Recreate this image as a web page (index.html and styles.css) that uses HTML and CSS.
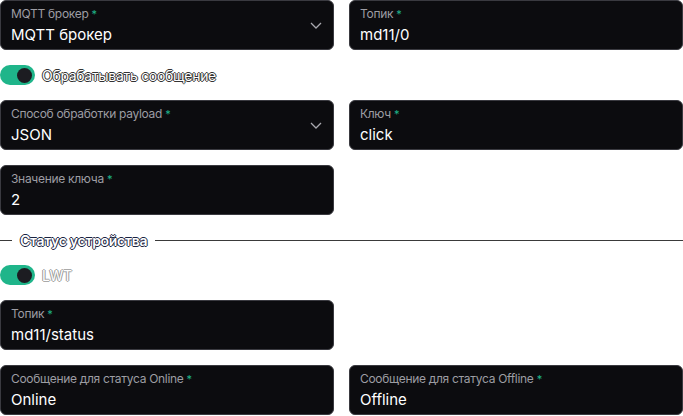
FILE: index.html
```html
<!DOCTYPE html>
<html lang="ru">
<head>
  <meta charset="UTF-8">
  <meta name="viewport" content="width=device-width, initial-scale=1.0">
  <title>Настройки MQTT</title>
  <link rel="stylesheet" href="styles.css">
</head>
<body>
  <div class="form">
    <div class="row">
      <div class="field select">
        <span class="label">MQTT брокер <i>*</i></span>
        <span class="value">MQTT брокер</span>
        <svg class="chevron" viewBox="0 0 12 7"><path d="M1 1l5 5 5-5" /></svg>
      </div>
      <div class="field">
        <span class="label">Топик <i>*</i></span>
        <span class="value">md11/0</span>
      </div>
    </div>

    <label class="switch">
      <span class="track"><span class="knob"></span></span>
      <span class="switch-text">Обрабатывать сообщение</span>
    </label>

    <div class="row">
      <div class="field select">
        <span class="label">Способ обработки payload <i>*</i></span>
        <span class="value">JSON</span>
        <svg class="chevron" viewBox="0 0 12 7"><path d="M1 1l5 5 5-5" /></svg>
      </div>
      <div class="field">
        <span class="label">Ключ <i>*</i></span>
        <span class="value">click</span>
      </div>
    </div>

    <div class="row">
      <div class="field">
        <span class="label">Значение ключа <i>*</i></span>
        <span class="value">2</span>
      </div>
    </div>

    <div class="divider">
      <span class="divider-text">Статус устройства</span>
    </div>

    <label class="switch">
      <span class="track"><span class="knob"></span></span>
      <span class="switch-text light">LWT</span>
    </label>

    <div class="row">
      <div class="field">
        <span class="label">Топик <i>*</i></span>
        <span class="value">md11/status</span>
      </div>
    </div>

    <div class="row">
      <div class="field">
        <span class="label">Сообщение для статуса Online <i>*</i></span>
        <span class="value">Online</span>
      </div>
      <div class="field">
        <span class="label">Сообщение для статуса Offline <i>*</i></span>
        <span class="value">Offline</span>
      </div>
    </div>
  </div>
</body>
</html>
```

FILE: styles.css
```css
body {
  margin: 0;
  background: #fff;
  font-family: Inter, "Noto Sans", sans-serif;
}

.form {
  width: 683px;
  display: flex;
  flex-direction: column;
  gap: 15px;
}

.row {
  display: grid;
  grid-template-columns: 1fr 1fr;
  gap: 15px;
}

.field {
  position: relative;
  height: 50px;
  box-sizing: border-box;
  padding: 6px 10px 0;
  background: #0c0c0f;
  border: 1px solid #3a3a40;
  border-radius: 6px;
  display: flex;
  flex-direction: column;
}

.label {
  font-size: 12px;
  line-height: 14px;
  color: #9d9da3;
  letter-spacing: -0.3px;
}

.label i {
  font-style: normal;
  color: #1fb58a;
  font-size: 11px;
}

.value {
  margin-top: 4px;
  font-size: 15px;
  line-height: 20px;
  font-weight: 400;
  color: #fff;
}

.chevron {
  position: absolute;
  right: 11px;
  top: 21px;
  width: 12px;
  height: 7px;
  fill: none;
  stroke: #a8a8ae;
  stroke-width: 1.3;
}

.switch {
  display: flex;
  align-items: center;
  gap: 7px;
  height: 20px;
}

.track {
  width: 35px;
  height: 20px;
  border-radius: 10px;
  background: #1fb58a;
  display: flex;
  align-items: center;
  justify-content: flex-end;
  padding-right: 3px;
  box-sizing: border-box;
}

.knob {
  width: 15px;
  height: 15px;
  border-radius: 50%;
  background: #1c1c21;
}

.switch-text {
  font-size: 14px;
  color: #fff;
  letter-spacing: -0.3px;
  text-shadow: 1px 0 #333, -1px 0 #333, 0 1px #333, 0 -1px #333;
}

.switch-text.light {
  text-shadow: 1px 0 #999, -1px 0 #999, 0 1px #aaa, 0 -1px #aaa;
}

.divider {
  display: flex;
  align-items: center;
  gap: 8px;
  height: 20px;
}

.divider::before {
  content: "";
  width: 12px;
  border-top: 1.5px solid #3a3a3a;
}

.divider::after {
  content: "";
  flex: 1;
  border-top: 1.5px solid #3a3a3a;
}

.divider-text {
  font-size: 14px;
  font-weight: 600;
  color: #fff;
  letter-spacing: -0.3px;
  text-shadow: 1px 0 #1a2340, -1px 0 #1a2340, 0 1px #1a2340, 0 -1px #1a2340;
}
```
